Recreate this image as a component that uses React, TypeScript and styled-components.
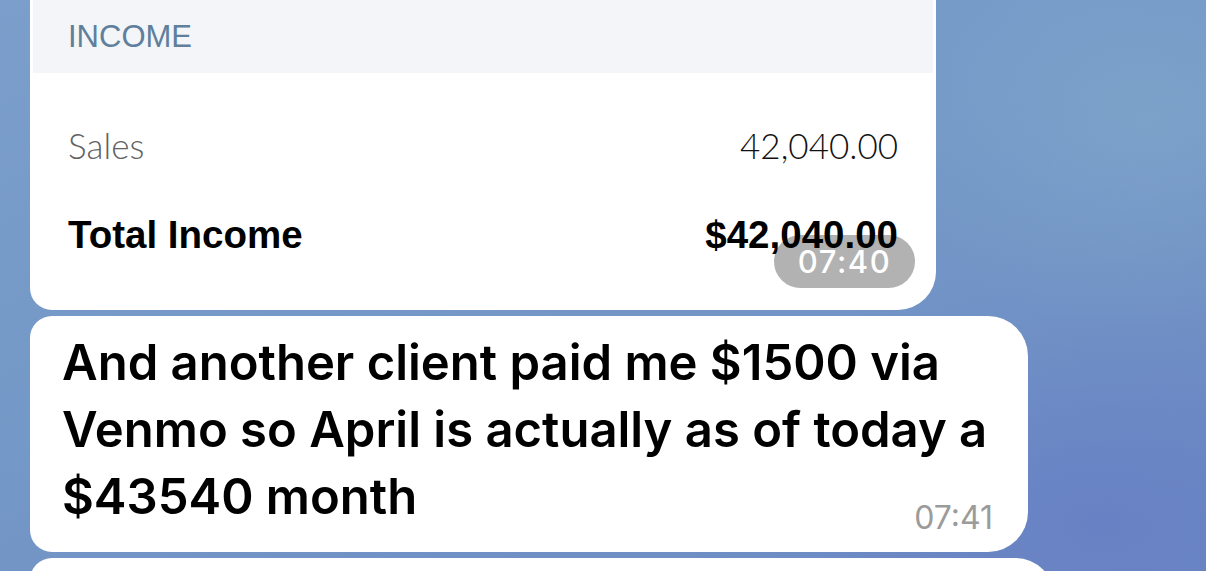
import React from 'react';
import styled, { createGlobalStyle } from 'styled-components';

const GlobalStyle = createGlobalStyle`
  html, body {
    margin: 0;
    padding: 0;
  }
  body {
    width: 1206px;
    height: 571px;
    overflow: hidden;
    font-family: "Inter", "Liberation Sans", sans-serif;
  }
`;

const reportRows = [
  { label: 'Sales', value: '42,040.00', total: false },
  { label: 'Total Income', value: '$42,040.00', total: true },
];

const App = () => {
  return (
    <>
      <GlobalStyle />
      <Screen>
        <Feed>
          <ReportBubble>
            <ReportHeader>INCOME</ReportHeader>
            <ReportBody>
              {reportRows.map((row) => (
                <ReportRow key={row.label} $total={row.total}>
                  <span>{row.label}</span>
                  <Amount $total={row.total}>{row.value}</Amount>
                </ReportRow>
              ))}
            </ReportBody>
            <MediaTime>07:40</MediaTime>
          </ReportBubble>

          <TextBubble $width={998}>
            <MessageText>
              And another client paid me $1500 via
              <br />
              Venmo so April is actually as of today a
              <br />
              $43540 month
            </MessageText>
            <Time>07:41</Time>
          </TextBubble>

          <TextBubble $width={1025} $height={120} />
        </Feed>
      </Screen>
    </>
  );
};

export default App;

const Screen = styled.div`
  width: 1206px;
  height: 571px;
  overflow: hidden;
  background:
    radial-gradient(ellipse 420px 300px at 1150px 120px, rgba(132, 172, 204, 0.55), transparent 70%),
    radial-gradient(ellipse 500px 300px at 1100px 520px, rgba(100, 122, 196, 0.6), transparent 70%),
    linear-gradient(160deg, #7b9ecb 0%, #7498c7 45%, #6c89c3 100%);
`;

const Feed = styled.div`
  display: flex;
  flex-direction: column;
  align-items: flex-start;
  gap: 6px;
  padding-left: 30px;
  margin-top: -24px;
`;

const ReportBubble = styled.div`
  position: relative;
  width: 906px;
  box-sizing: border-box;
  padding: 3px;
  background: #fff;
  border-radius: 0 0 38px 22px;
`;

const ReportHeader = styled.div`
  display: flex;
  align-items: center;
  box-sizing: border-box;
  height: 94px;
  padding: 22px 35px 0;
  background: #f3f5f8;
  color: #5f7f9c;
  font-family: "Liberation Sans", Arial, sans-serif;
  font-size: 31px;
`;

const ReportBody = styled.div`
  display: flex;
  flex-direction: column;
  gap: 3px;
  padding: 29px 35px 28px;
`;

const ReportRow = styled.div<{ $total: boolean }>`
  display: flex;
  align-items: center;
  justify-content: space-between;
  height: 87px;
  line-height: 1;
  font-family: ${(p) => (p.$total ? '"Liberation Sans", Arial, sans-serif' : 'Lato, "Liberation Sans", sans-serif')};
  font-size: ${(p) => (p.$total ? '38.5px' : '35px')};
  font-weight: ${(p) => (p.$total ? 700 : 300)};
  color: ${(p) => (p.$total ? '#000' : '#626262')};
`;

const Amount = styled.span<{ $total: boolean }>`
  color: ${(p) => (p.$total ? '#000' : '#111')};
`;

const MediaTime = styled.div`
  position: absolute;
  right: 21px;
  bottom: 22px;
  display: flex;
  align-items: center;
  justify-content: center;
  width: 141px;
  height: 53px;
  border-radius: 27px;
  background: rgba(0, 0, 0, 0.3);
  color: #fff;
  font-size: 31px;
  font-weight: 500;
  letter-spacing: 1.5px;
`;

const TextBubble = styled.div<{ $width: number; $height?: number }>`
  display: flex;
  flex-direction: column;
  box-sizing: border-box;
  width: ${(p) => p.$width}px;
  min-height: ${(p) => (p.$height ? `${p.$height}px` : 'auto')};
  padding: 13px 35px 14px 32px;
  background: #fff;
  border-radius: 22px 40px 40px 22px;
`;

const MessageText = styled.div`
  color: #000;
  font-size: 49px;
  font-weight: 600;
  line-height: 67px;
  white-space: nowrap;
`;

const Time = styled.div`
  align-self: flex-end;
  margin-top: -32px;
  color: #9b9b9b;
  font-size: 32px;
  line-height: 40px;
`;
